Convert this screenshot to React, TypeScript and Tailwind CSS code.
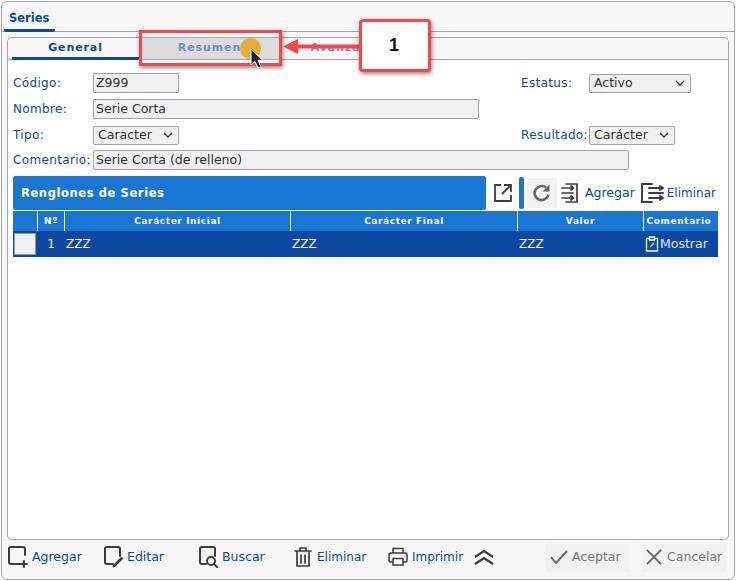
import React from "react";

const ic = "#3c3c3c";

function Label({ children, className = "" }: { children: React.ReactNode; className?: string }) {
  return <span className={"text-[12px] tracking-[0.35px] text-[#0d47a1] whitespace-nowrap " + className}>{children}</span>;
}

function Field({ value, className = "" }: { value: string; className?: string }) {
  return (
    <div className={"h-[20px] bg-[#f1f1f1] border border-[#a0a0a0] rounded-[2px] pl-[2px] text-[12.5px] leading-[18px] text-[#333] " + className}>
      {value}
    </div>
  );
}

function Select({ value, className = "" }: { value: string; className?: string }) {
  return (
    <div className={"h-[19px] bg-[#f1f1f1] border border-[#a0a0a0] rounded-[2px] pl-[4px] pr-[5px] flex items-center justify-between text-[12.5px] text-[#333] " + className}>
      <span>{value}</span>
      <svg width="10" height="6" viewBox="0 0 10 6" fill="none" stroke="#333" strokeWidth="1.3"><path d="M1 1l4 4 4-4" /></svg>
    </div>
  );
}

function Doc({ children }: { children?: React.ReactNode }) {
  return (
    <svg width="20" height="22" viewBox="0 0 20 22" fill="none" stroke={ic} strokeWidth="2" strokeLinecap="round" strokeLinejoin="round" className="shrink-0 mr-[4px]">
      {children}
    </svg>
  );
}

function FootAction({ icon, label, className = "", textClass = "text-[12.5px]" }: { icon: React.ReactNode; label: string; className?: string; textClass?: string }) {
  return (
    <div className={"flex items-center shrink-0 " + className}>
      {icon}
      <span className={"text-[#0d47a1] " + textClass}>{label}</span>
    </div>
  );
}

export default function App() {
  return (
    <div className="relative w-[736px] h-[581px] bg-white overflow-hidden font-['DejaVu_Sans',sans-serif]">
      <div className="mx-[1px] mt-[1px] h-[579px] w-[734px] bg-[#f7f7f7] border border-[#a6a6a6] rounded-[6px] flex flex-col">
        <div className="h-[30px] shrink-0 border-b border-[#a6a6a6] pl-[2px] flex items-end">
          <div className="h-[29px] w-[51px] pl-[5px] pt-[3px] border-b-[3px] border-[#0d47a1] rounded-b-[2px] text-[11.5px] font-bold text-[#0d47a1] leading-[25px] -mb-[1px]">Series</div>
        </div>

        <div className="mx-[5px] mt-[5px] h-[503px] shrink-0 border border-[#a6a6a6] rounded-[5px] bg-white flex flex-col">
          <div className="h-[22px] shrink-0 bg-[#f7f7f7] rounded-t-[5px] border-b border-[#a6a6a6] pl-[4px] flex text-[11px] font-bold tracking-[0.9px]">
            <div className="w-[127px] h-[22px] text-center border-b-[3px] border-[#0d47a1] rounded-b-[2px] text-[#0d47a1] leading-[20px]">General</div>
            <div className="w-[141px] h-[21px] text-center bg-[#dcdcdc] text-[#6f8fc4] leading-[20px]">Resumen</div>
            <div className="w-[128px] text-center text-[#6f8fc4] leading-[20px]">Avanzado</div>
          </div>

          <div className="px-[5px] pt-[13px] flex flex-col">
            <div className="flex items-center h-[20px]">
              <Label className="w-[80px]">Código:</Label>
              <Field value="Z999" className="w-[86px]" />
              <Label className="ml-[342px] w-[68px]">Estatus:</Label>
              <Select value="Activo" className="w-[102px]" />
            </div>
            <div className="flex items-center h-[20px] mt-[6px]">
              <Label className="w-[80px]">Nombre:</Label>
              <Field value="Serie Corta" className="w-[386px]" />
            </div>
            <div className="flex items-center h-[20px] mt-[6px]">
              <Label className="w-[80px]">Tipo:</Label>
              <Select value="Caracter" className="w-[86px]" />
              <Label className="ml-[342px] w-[68px]">Resultado:</Label>
              <Select value="Carácter" className="w-[86px]" />
            </div>
            <div className="flex items-center h-[20px] mt-[5px]">
              <Label className="w-[80px]">Comentario:</Label>
              <Field value="Serie Corta (de relleno)" className="w-[536px]" />
            </div>

            <div className="flex items-center h-[34px] mt-[6px]">
              <div className="w-[473px] h-[34px] bg-[#1976d2] rounded-[2px] pl-[8px] text-[11.5px] font-bold tracking-[0.6px] text-white leading-[34px]">Renglones de Series</div>
              <svg width="20" height="20" viewBox="0 0 20 20" fill="none" stroke={ic} strokeWidth="1.8" className="ml-[7px] shrink-0">
                <path d="M8 2H2v16h16v-6M11 2h7v7M18 2L9 11" />
              </svg>
              <div className="w-[5px] h-[32px] bg-[#1976d2] rounded-[2px] ml-[6px]" />
              <div className="w-[30px] h-[30px] ml-[3px] bg-[#f2f2f2] rounded-[2px] flex items-center justify-center">
                <svg width="18" height="18" viewBox="0 0 18 18" fill="none" stroke="#666" strokeWidth="2.6"><path d="M15.5 10.5A7 7 0 1 1 13 3.6" /><path d="M16.500 0.500v7h-7" fill="#666" stroke="none" /></svg>
              </div>
              <svg width="18" height="20" viewBox="0 0 18 20" fill="none" stroke={ic} strokeWidth="1.7" strokeLinecap="round" className="ml-[4px] shrink-0">
                <path d="M5 1h11v18H5M1 5h11M1 10h11M1 15h11M10 3l2.500 2-2.500 2M10 13l2.500 2-2.500 2" />
              </svg>
              <span className="ml-[6px] text-[12.5px] text-[#0d47a1]">Agregar</span>
              <svg width="25" height="20" viewBox="0 0 25 20" fill="none" stroke={ic} strokeWidth="1.9" strokeLinecap="round" className="ml-[5px] shrink-0">
                <path d="M12 1H2v18h10M9 5h14M9 10h14M9 15h14M20 3l3 2-3 2M20 13l3 2-3 2" />
              </svg>
              <span className="ml-[2px] text-[12px] text-[#0d47a1]">Eliminar</span>
            </div>

            <div className="mt-[1px] w-[705px] text-white">
              <div className="h-[20px] bg-[#1976d2] flex text-[9px] font-bold tracking-[0.6px] leading-[21px] text-center">
                <div className="w-[25px] border-r border-white" />
                <div className="w-[27px] border-r border-white">Nº</div>
                <div className="w-[226px] border-r border-white">Carácter Inicial</div>
                <div className="w-[227px] border-r border-white">Carácter Final</div>
                <div className="w-[126px] border-r border-white">Valor</div>
                <div className="flex-1 pr-[4px]">Comentario</div>
              </div>
              <div className="h-[26px] bg-[#0d47a1] flex items-center text-[12px]">
                <div className="w-[25px] flex">
                  <div className="ml-[1px] w-[22px] h-[22px] bg-[#f0f0f0] border border-[#999]" />
                </div>
                <div className="w-[27px] text-right pr-[10px]">1</div>
                <div className="w-[226px] pl-[1px]">ZZZ</div>
                <div className="w-[227px] pl-[1px]">ZZZ</div>
                <div className="w-[126px] pl-[1px]">ZZZ</div>
                <div className="flex-1 flex items-center pl-[1px]">
                  <svg width="14" height="16" viewBox="0 0 14 16" fill="none" stroke="#fff" strokeWidth="1.3" className="shrink-0">
                    <path d="M4 2.500H1.500v12.500h11V2.500H10M4.500 1h5v3h-5zM5 11l4-4" />
                  </svg>
                  <span className="ml-[1px] text-[12.5px] text-[#e6e6e6]">Mostrar</span>
                </div>
              </div>
            </div>
          </div>
        </div>

        <div className="flex items-center h-[37px] pl-[6px] pb-[3px]">
          <FootAction className="w-[95px]" label="Agregar" icon={
            <Doc><path d="M17 9V3a2 2 0 0 0-2-2H3a2 2 0 0 0-2 2v13a2 2 0 0 0 2 2h9" /><path d="M13 18h6M16 15v6" /></Doc>} />
          <FootAction className="w-[95px]" label="Editar" icon={
            <Doc><path d="M10 18H4a2 2 0 0 1-2-2V3a2 2 0 0 1 2-2h11a2 2 0 0 1 2 2v7" /><path d="M11 20l7.500-7.500" strokeWidth="2.800" /></Doc>} />
          <FootAction className="w-[95px]" label="Buscar" icon={
            <Doc><path d="M8 18H4a2 2 0 0 1-2-2V3a2 2 0 0 1 2-2h11a2 2 0 0 1 2 2v7" /><circle cx="13" cy="15" r="4" /><path d="M16 18l3 3" /></Doc>} />
          <FootAction className="w-[95px]" label="Eliminar" textClass="text-[12px]" icon={
            <Doc><path d="M2 5h16M7 4V2h6v2M4 6v14h12V6M8 9v8M12 9v8" strokeWidth="1.7" /></Doc>} />
          <FootAction label="Imprimir" textClass="text-[12px]" icon={
            <svg width="20" height="20" viewBox="0 0 20 20" fill="none" stroke={ic} strokeWidth="1.500" className="shrink-0 mr-[4px]"><path d="M5 6V1.500h10V6M5 15H2.500A1.500 1.500 0 0 1 1 13.500V8a2 2 0 0 1 2-2h14a2 2 0 0 1 2 2v5.500a1.500 1.500 0 0 1-1.500 1.500H15M5 11.500h10V18H5z" /></svg>} />
          <svg width="20" height="16" viewBox="0 0 20 16" fill="none" stroke={ic} strokeWidth="2.200" className="ml-[11px] shrink-0"><path d="M1 8l9-6 9 6M1 15l9-6 9 6" /></svg>
          <div className="ml-[52px] w-[85px] h-[30px] bg-[#f2f2f2] rounded-[2px] flex items-center pl-[4px] text-[12.5px] text-[#777]">
            <svg width="18" height="14" viewBox="0 0 18 14" fill="none" stroke="#666" strokeWidth="1.900" className="shrink-0 mr-[4px]"><path d="M1 7l5 6L17 1" /></svg>
            Aceptar
          </div>
          <div className="ml-[10px] w-[85px] h-[30px] bg-[#f2f2f2] rounded-[2px] flex items-center pl-[5px] text-[12.5px] text-[#777]">
            <svg width="16" height="16" viewBox="0 0 17 17" fill="none" stroke="#666" strokeWidth="1.900" className="shrink-0 mr-[5px]"><path d="M1 1l15 15M16 1L1 16" /></svg>
            Cancelar
          </div>
        </div>
      </div>

      {/* annotation overlay */}
      <div className="absolute left-[139px] top-[30px] w-[143px] h-[36px] border-[3px] border-[#fb4444] shadow-[1px_2px_4px_rgba(0,0,0,0.45)]" />
      <div className="absolute left-[240px] top-[38px] w-[21px] h-[21px] rounded-full bg-[#e3aa36] opacity-95" />
      <svg className="absolute left-[250px] top-[48px]" width="14" height="22" viewBox="0 0 14 22">
        <path d="M1 1v16l4-3.500 3 6.500 3-1.300-3-6.200h5z" fill="#222" stroke="#fff" strokeWidth="1" />
      </svg>
      <svg className="absolute left-[283px] top-[38px]" width="78" height="17" viewBox="0 0 78 17">
        <path d="M0 8.500L15 1v5.500h63v4H15V16z" fill="#fb4444" />
      </svg>
      <div className="absolute left-[359px] top-[19px] w-[72px] h-[53px] pr-[2px] bg-white border-[3px] border-[#fb4444] rounded-[4px] shadow-[1px_2px_4px_rgba(0,0,0,0.45)] flex items-center justify-center font-['Liberation_Sans',sans-serif] font-bold text-[18px] text-[#111]">1</div>
    </div>
  );
}
